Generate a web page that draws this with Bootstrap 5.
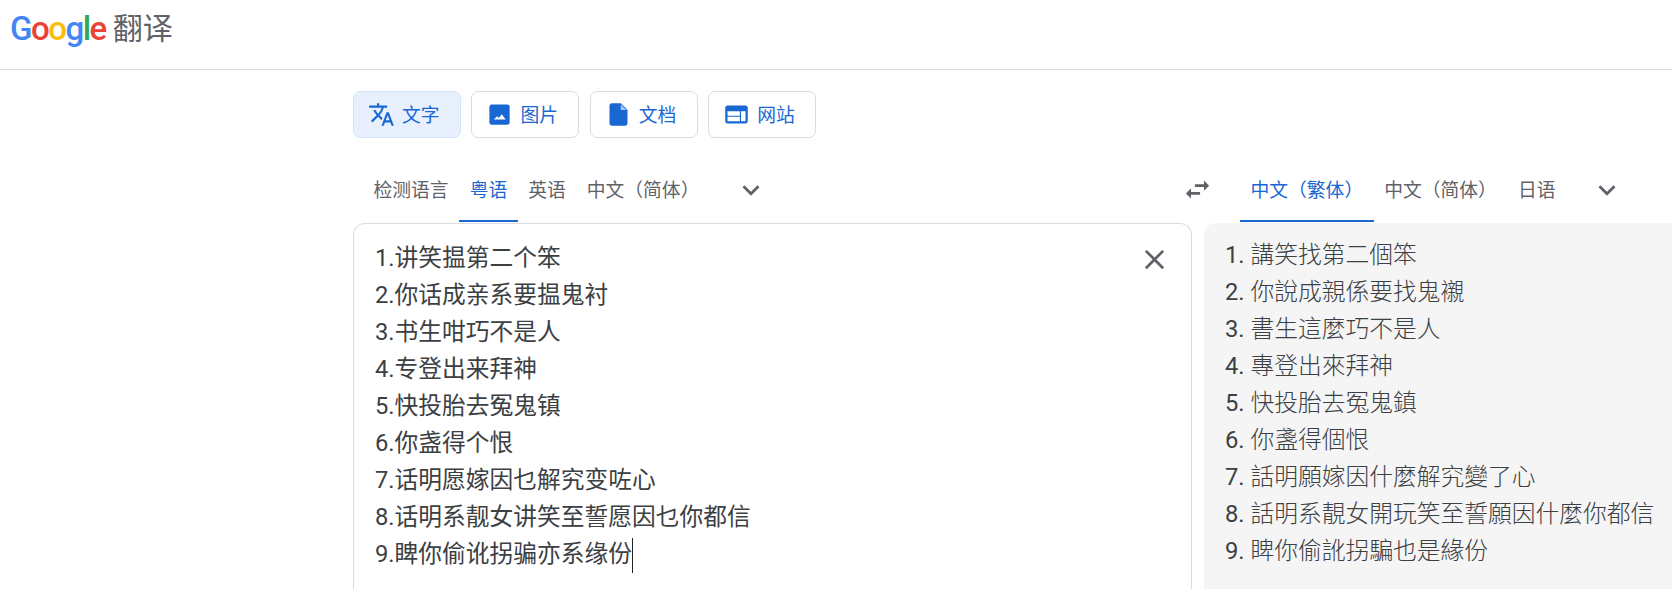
<!doctype html>
<html lang="zh-CN"><head><meta charset="utf-8">
<link rel="stylesheet" href="https://cdn.jsdelivr.net/npm/bootstrap@5.3.0/dist/css/bootstrap.min.css">
<style>
html,body{height:100%;overflow:hidden;background:#fff}
body{font-family:Roboto,"Noto Sans CJK SC","Liberation Sans",sans-serif;color:#3c4043}
.topbar{height:70px;border-bottom:1px solid #dadce0;padding:0 0 12px 10px}
.gword{font-family:Roboto,sans-serif;font-weight:500;font-size:33px;line-height:1;letter-spacing:-1.500px}
.gb{color:#4285f4}.gr{color:#ea4335}.gy{color:#fbbc05}.gg{color:#34a853}
.prod{font-size:30px;line-height:1;color:#5f6368;margin-left:7px}
.workarea{width:1400px;margin-left:353px}
.modes{padding-top:21px;gap:10.400px}
.modebtn{width:108px;height:47px;border:1px solid #dadce0;border-radius:7px;background:#fff;color:#1967d2;font-size:18.800px;display:flex;align-items:center;gap:7px;padding:0 0 0 14px}
.modebtn.on{background:#e8f0fe;border-color:#d2e3fc}
.modebtn svg{width:27px;height:27px;fill:#1967d2;flex:none}
.modelabel{margin-top:3px}
.langs{margin-top:18px;height:67px}
.langl{width:829px;padding-left:10px}
.ltab{height:66px;font-size:18.800px;color:#5f6368;padding:6px 10.500px 0;display:flex;align-items:center;white-space:nowrap;border-bottom:2px solid transparent}
.ltab.on{color:#1967d2;border-bottom-color:#1967d2}
.chev{width:34px;height:34px;fill:#5f6368}
.swapico{width:31px;height:31px;fill:#5f6368;margin-right:27px}
.panes{gap:12px}
.srcpane{width:839px;height:400px;border:1px solid #dadce0;border-bottom:0;border-radius:12px 12px 0 0;padding:16px 0 0 21px;position:relative}
.trgpane{flex:1;height:400px;background:#f5f5f5;border-radius:12px 12px 0 0;padding:14px 0 0 21px}
.ln{font-size:23.750px;line-height:37px;white-space:nowrap}
.trgpane .ln{font-family:Roboto,"Noto Sans CJK TC",sans-serif;font-weight:300}
.trgpane .ln b{font-weight:400}
.caret-mark{display:inline-block;width:1px;height:35px;background:#202124;vertical-align:middle}
.clearbtn{position:absolute;top:19px;right:20px;width:33px;height:33px;fill:#5f6368}
</style></head><body>
<header class="topbar d-flex align-items-center">
<span class="gword"><span class="gb">G</span><span class="gr">o</span><span class="gy">o</span><span class="gb">g</span><span class="gg">l</span><span class="gr">e</span></span>
<span class="prod">翻译</span>
</header>
<main class="workarea">
<div class="modes d-flex">
<button class="modebtn on" type="button"><svg viewBox="0 0 24 24"><path d="M12.870 15.070l-2.540-2.510.03-.03A17.520 17.520 0 0 0 14.070 6H17V4h-7V2H8v2H1v1.990h11.170C11.500 7.920 10.440 9.750 9 11.350 8.070 10.320 7.300 9.190 6.690 8h-2c.73 1.630 1.730 3.170 2.980 4.560l-5.090 5.020L4 19l5-5 3.110 3.110.76-2.040zM18.500 10h-2L12 22h2l1.120-3h4.750L21 22h2l-4.500-12zm-2.620 7l1.620-4.330L19.120 17h-3.240z"/></svg><span class="modelabel">文字</span></button>
<button class="modebtn" type="button"><svg viewBox="0 0 24 24"><path fill-rule="evenodd" d="M5 3h14c1.100 0 2 .9 2 2v14c0 1.100-.9 2-2 2H5c-1.100 0-2-.9-2-2V5c0-1.100.9-2 2-2zM7 16.500h10.500L14 11.700l-2.600 3.500-1.500-1.700z"/></svg><span class="modelabel">图片</span></button>
<button class="modebtn" type="button"><svg viewBox="0 0 24 24"><path d="M14 2H6c-1.100 0-2 .9-2 2v16c0 1.100.9 2 2 2h12c1.100 0 2-.9 2-2V8l-6-6z"/><path fill="#a8c7fa" d="M14 3v5h5z"/></svg><span class="modelabel">文档</span></button>
<button class="modebtn" type="button"><svg viewBox="0 0 24 24"><path d="M20 4H4c-1.100 0-1.990.9-1.990 2L2 18c0 1.100.9 2 2 2h16c1.100 0 2-.9 2-2V6c0-1.100-.9-2-2-2zm-5 14H4v-4h11v4zm0-5H4V9h11v4zm5 5h-4V9h4v9z"/></svg><span class="modelabel">网站</span></button>
</div>
<div class="langs d-flex">
<div class="langl d-flex">
<div class="ltab">检测语言</div><div class="ltab on">粤语</div><div class="ltab">英语</div><div class="ltab">中文（简体）</div>
<div class="d-flex align-items-center ms-4"><svg class="chev" viewBox="0 0 24 24"><path d="M7.410 8.590L12 13.170l4.590-4.580L18 10l-6 6-6-6z"/></svg></div>
</div>
<div class="d-flex">
<div class="d-flex align-items-center"><svg class="swapico" viewBox="0 0 24 24"><path d="M6.990 11L3 15l3.990 4v-3H14v-2H6.990v-3zM21 9l-3.990-4v3H10v2h7.010v3L21 9z"/></svg></div>
<div class="ltab on">中文（繁体）</div><div class="ltab">中文（简体）</div><div class="ltab">日语</div>
<div class="d-flex align-items-center ms-4"><svg class="chev" viewBox="0 0 24 24"><path d="M7.410 8.590L12 13.170l4.590-4.580L18 10l-6 6-6-6z"/></svg></div>
</div>
</div>
<div class="panes d-flex">
<section class="srcpane">
<svg class="clearbtn" viewBox="0 0 24 24"><path d="M19 6.410L17.590 5 12 10.590 6.410 5 5 6.410 10.590 12 5 17.590 6.410 19 12 13.410 17.590 19 19 17.590 13.410 12z"/></svg>
<div class="ln">1.讲笑揾第二个笨</div>
<div class="ln">2.你话成亲系要揾鬼衬</div>
<div class="ln">3.书生咁巧不是人</div>
<div class="ln">4.专登出来拜神</div>
<div class="ln">5.快投胎去冤鬼镇</div>
<div class="ln">6.你盏得个恨</div>
<div class="ln">7.话明愿嫁因乜解究变咗心</div>
<div class="ln">8.话明系靓女讲笑至誓愿因乜你都信</div>
<div class="ln">9.睥你偷讹拐骗亦系缘份<span class="caret-mark"></span></div>
</section>
<section class="trgpane">
<div class="ln"><b>1.</b> 講笑找第二個笨</div>
<div class="ln"><b>2.</b> 你說成親係要找鬼襯</div>
<div class="ln"><b>3.</b> 書生這麼巧不是人</div>
<div class="ln"><b>4.</b> 專登出來拜神</div>
<div class="ln"><b>5.</b> 快投胎去冤鬼鎮</div>
<div class="ln"><b>6.</b> 你盞得個恨</div>
<div class="ln"><b>7.</b> 話明願嫁因什麼解究變了心</div>
<div class="ln"><b>8.</b> 話明系靚女開玩笑至誓願因什麼你都信</div>
<div class="ln"><b>9.</b> 睥你偷訛拐騙也是緣份</div>
</section>
</div>
</main>
<script src="https://cdn.jsdelivr.net/npm/bootstrap@5.3.0/dist/js/bootstrap.bundle.min.js"></script>
</body></html>
